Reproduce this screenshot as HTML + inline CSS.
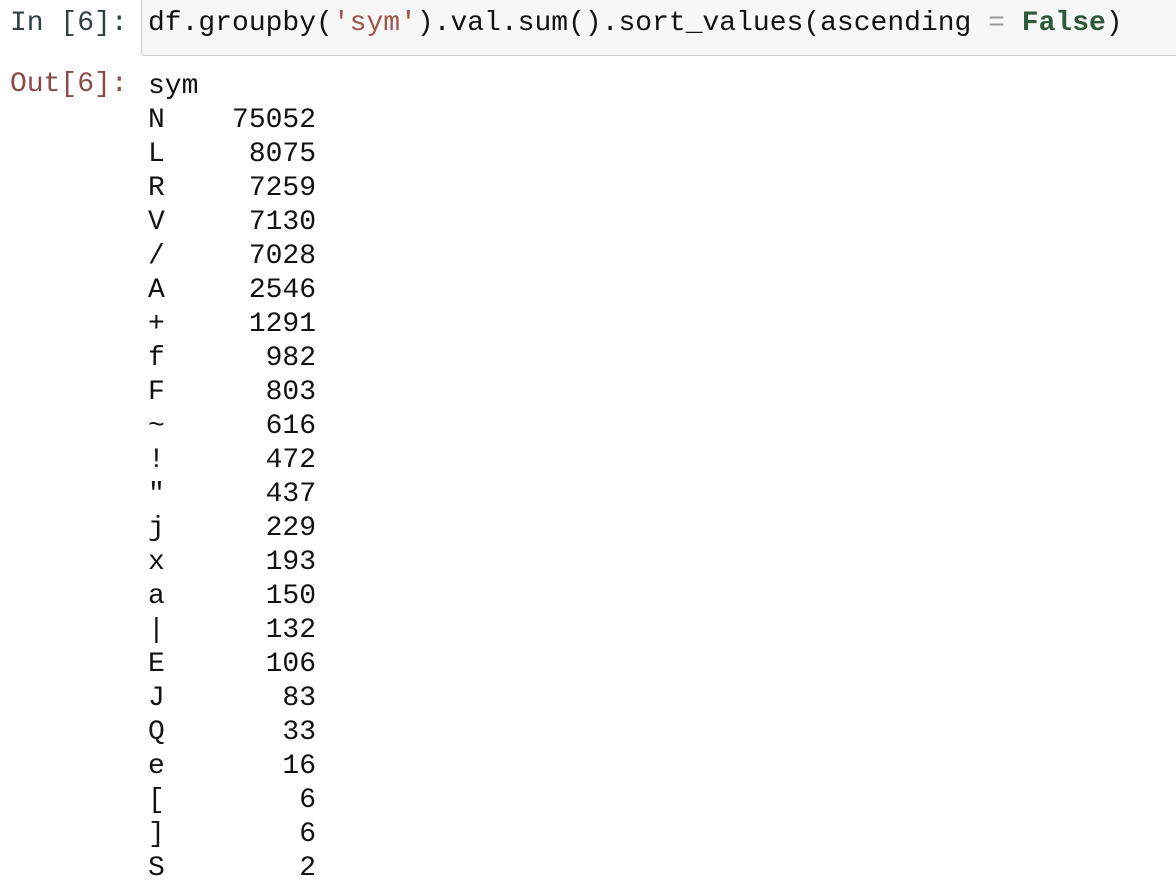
<!DOCTYPE html>
<html><head><style>
body{margin:0;background:#fff;width:1176px;height:890px;overflow:hidden;position:relative;font-family:"Liberation Mono",monospace;font-size:28px;}
.box{position:absolute;left:141px;top:-6px;width:1060px;height:60px;background:#f7f7f7;border:1px solid #cfcfcf;border-radius:3px;}
.code{position:absolute;left:148px;top:7px;line-height:34px;color:#111;white-space:pre;}
.pin{position:absolute;left:10px;top:7px;line-height:34px;color:#303f3f;white-space:pre;}
.pout{position:absolute;left:10px;top:68px;line-height:34px;color:#8b4a44;white-space:pre;}
.out{position:absolute;left:148px;top:70px;color:#111;white-space:pre;margin:0;font-family:"Liberation Mono",monospace;font-size:28px;line-height:34px;}
.s{color:#a0524b}.k{color:#2b5a3a;font-weight:bold}.o{color:#999}
</style></head><body>
<div class="box"></div>
<div class="pin">In [6]:</div>
<div class="code">df.groupby(<span class="s">'sym'</span>).val.sum().sort_values(ascending <span class="o">=</span> <span class="k">False</span>)</div>
<div class="pout">Out[6]:</div>
<pre class="out">sym
N    75052
L     8075
R     7259
V     7130
/     7028
A     2546
+     1291
f      982
F      803
~      616
!      472
"      437
j      229
x      193
a      150
|      132
E      106
J       83
Q       33
e       16
[        6
]        6
S        2</pre>
</body></html>
